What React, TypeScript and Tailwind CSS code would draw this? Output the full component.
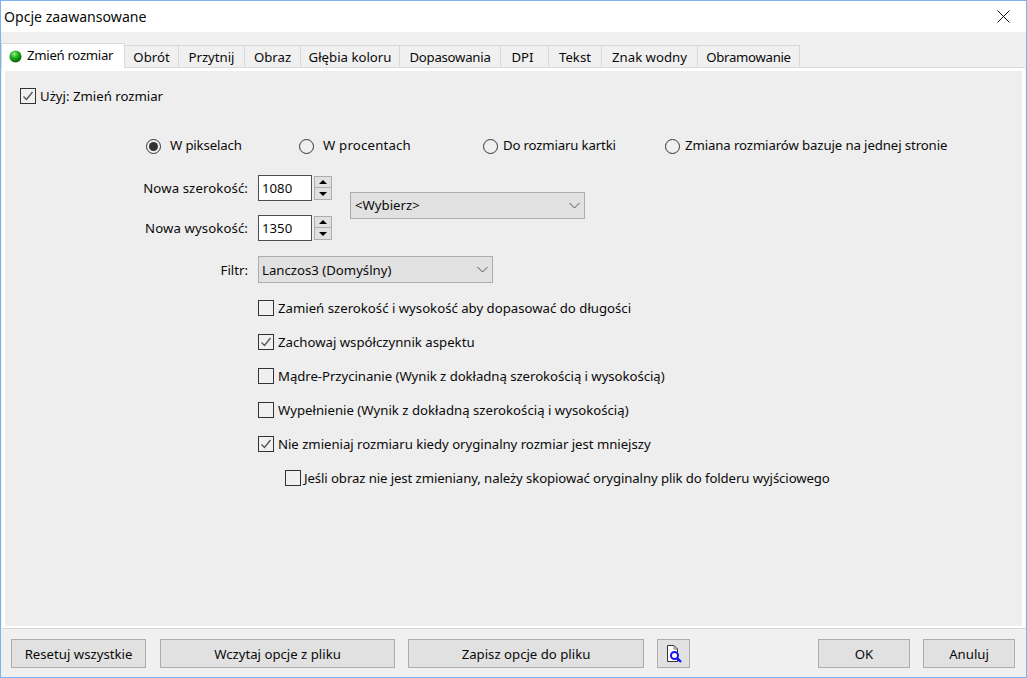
import React from 'react';

const tabs: [string, number, string][] = [
  ['Obrót', 54, ''],
  ['Przytnij', 66, ''],
  ['Obraz', 56, ''],
  ['Głębia koloru', 99, ''],
  ['Dopasowania', 101, 'tracking-[-0.25px]'],
  ['DPI', 48, 'pr-[4px]'],
  ['Tekst', 53, ''],
  ['Znak wodny', 96, ''],
  ['Obramowanie', 102, 'tracking-[-0.3px]'],
];

const Check = ({ checked }: { checked?: boolean }) => (
  <span className="w-4 h-4 shrink-0 bg-[#f0f0f0] border border-[#333333] flex items-center justify-center">
    {checked && (
      <svg width="14" height="14" viewBox="0 0 14 14" fill="none">
        <path d="M2.5 7.5 L5.5 10.5 L11.5 3" stroke="#555555" strokeWidth="1.4" />
      </svg>
    )}
  </span>
);

const CheckRow = ({ label, checked, indent, fit = '' }: { label: string; checked?: boolean; indent?: boolean; fit?: string }) => (
  <div className={`h-[34px] flex items-center ${indent ? 'pl-[280px] gap-[3px]' : 'pl-[253px] gap-1'}`}>
    <Check checked={checked} />
    <span className={`pt-[2px] ${fit}`}>{label}</span>
  </div>
);

const Radio = ({ label, checked, width, gap, fit = '' }: { label: string; checked?: boolean; width: string; gap: string; fit?: string }) => (
  <div className={`flex items-center whitespace-nowrap ${width} ${gap}`}>
    <span className="w-[15px] h-[15px] shrink-0 rounded-full bg-[#f0f0f0] border border-[#333333] flex items-center justify-center">
      {checked && <span className="w-[9px] h-[9px] rounded-full bg-[#333333]" />}
    </span>
    <span className={fit}>{label}</span>
  </div>
);

const Spinner = () => (
  <div className="w-[18px] h-[24px] ml-[2px] flex flex-col">
    <div className="h-[12px] bg-[#e1e1e1] border border-[#adadad] flex items-center justify-center">
      <span className="w-0 h-0 border-x-[4px] border-x-transparent border-b-[4px] border-b-black" />
    </div>
    <div className="h-[12px] bg-[#e1e1e1] border border-t-0 border-[#adadad] flex items-center justify-center">
      <span className="w-0 h-0 border-x-[4px] border-x-transparent border-t-[4px] border-t-black" />
    </div>
  </div>
);

const Chevron = () => (
  <svg width="11" height="7" viewBox="0 0 11 7" fill="none">
    <path d="M0.5 1 L5.5 6 L10.5 1" stroke="#555555" strokeWidth="1" />
  </svg>
);

const Select = ({ label, width, left }: { label: string; width: string; left: string }) => (
  <div className={`${width} ${left} h-[27px] bg-[#e1e1e1] border border-[#adadad] flex items-center justify-between pr-[4px]`}>
    <span className="pt-[2px]">{label}</span>
    <Chevron />
  </div>
);

const SizeRow = ({ label, value }: { label: string; value: string }) => (
  <div className="h-[26px] flex items-center">
    <span className="w-[243px] pt-[2px] text-right tracking-[0.1px]">{label}</span>
    <div className="w-[54px] h-[26px] ml-[10px] pt-[2px] bg-white border border-[#4d4d4d] pl-[3px] flex items-center">{value}</div>
    <Spinner />
  </div>
);

const Btn = ({ label, width }: { label: string; width: string }) => (
  <div className={`${width} h-[29px] pt-[2px] bg-[#e1e1e1] border border-[#adadad] flex items-center justify-center`}>{label}</div>
);

export default function App() {
  return (
    <div
      className="w-[1027px] h-[678px] bg-[#f0f0f0] border border-[#7ab4ee] flex flex-col overflow-hidden text-[13.2px] leading-none text-[#0a0a0a]"
      style={{ fontFamily: '"Noto Sans", "Open Sans", sans-serif' }}
    >
      {/* Title bar */}
      <div className="h-[31px] shrink-0 bg-white flex items-center justify-between pl-[3px] pr-[16px]">
        <span className="text-[14.1px] pt-[1px]">Opcje zaawansowane</span>
        <svg width="13" height="13" viewBox="0 0 13 13" fill="none">
          <path d="M0.5 0.5 L12.5 12.5 M12.5 0.5 L0.5 12.5" stroke="#111111" strokeWidth="1" />
        </svg>
      </div>

      {/* Tabs */}
      <div className="h-[35px] shrink-0 flex items-end">
        <div className="relative z-10 w-[124px] h-[25px] -mb-px bg-white border border-b-0 border-[#d9d9d9] flex items-center pl-[7px] gap-[5px]">
          <svg width="13" height="13" viewBox="0 0 13 13">
            <defs>
              <radialGradient id="ball" cx="40%" cy="30%" r="70%">
                <stop offset="0%" stopColor="#9af08a" />
                <stop offset="45%" stopColor="#1fb31f" />
                <stop offset="100%" stopColor="#075f07" />
              </radialGradient>
            </defs>
            <circle cx="6.5" cy="6.5" r="6" fill="url(#ball)" />
          </svg>
          <span className="tracking-[-0.3px]">Zmień rozmiar</span>
        </div>
        {tabs.map(([name, w, fit]) => (
          <div
            key={name}
            className={`h-[22px] pt-[3px] bg-[#f0f0f0] border border-b-0 border-l-0 border-[#d9d9d9] flex items-center justify-center shrink-0 ${fit}`}
            style={{ width: w }}
          >
            {name}
          </div>
        ))}
      </div>

      {/* Panel */}
      <div className="flex-1 ml-px mr-px border-t border-[#d9d9d9] bg-white px-[3px] pt-[3px] pb-[2px] flex">
        <div className="flex-1 bg-[#eeeeee]">
          <div className="pl-[15px] pt-[17px] flex items-center gap-1 h-[33px]">
            <Check checked />
            <span className="pt-[2px]">Użyj: Zmień rozmiar</span>
          </div>

          <div className="mt-[25px] h-[34px] pl-[141px] flex items-center">
            <Radio label="W pikselach" checked width="w-[153px]" gap="gap-[9px]" fit="tracking-[-0.15px]" />
            <Radio label="W procentach" width="w-[184px]" gap="gap-[9px]" fit="tracking-[0.2px]" />
            <Radio label="Do rozmiaru kartki" width="w-[182px]" gap="gap-[5px]" fit="tracking-[-0.15px]" />
            <Radio label="Zmiana rozmiarów bazuje na jednej stronie" width="w-[290px]" gap="gap-[5px]" fit="tracking-[-0.1px]" />
          </div>

          <div className="mt-[12px] flex items-center">
            <div className="flex flex-col gap-[14px]">
              <SizeRow label="Nowa szerokość:" value="1080" />
              <SizeRow label="Nowa wysokość:" value="1350" />
            </div>
            <Select label="<Wybierz>" width="w-[235px] mb-[6px]" left="ml-[18px] pl-[4px]" />
          </div>

          <div className="mt-[15px] flex items-center">
            <span className="w-[243px] pt-[2px] text-right">Filtr:</span>
            <Select label="Lanczos3 (Domyślny)" width="w-[235px]" left="ml-[10px] pl-[3px]" />
          </div>

          <div className="mt-[8px]">
            <CheckRow label="Zamień szerokość i wysokość aby dopasować do długości" />
            <CheckRow label="Zachowaj współczynnik aspektu" checked />
            <CheckRow label="Mądre-Przycinanie (Wynik z dokładną szerokością i wysokością)" fit="tracking-[-0.05px]" />
            <CheckRow label="Wypełnienie (Wynik z dokładną szerokością i wysokością)" />
            <CheckRow label="Nie zmieniaj rozmiaru kiedy oryginalny rozmiar jest mniejszy" fit="tracking-[-0.03px]" checked />
            <CheckRow label="Jeśli obraz nie jest zmieniany, należy skopiować oryginalny plik do folderu wyjściowego" fit="tracking-[-0.1px]" indent />
          </div>
        </div>
      </div>

      {/* Footer */}
      <div className="h-[49px] shrink-0 ml-px border-t border-[#d9d9d9] pl-[9px] pr-[11px] pt-[10px] flex items-start">
        <Btn label="Resetuj wszystkie" width="w-[135px]" />
        <div className="w-[14px]" />
        <Btn label="Wczytaj opcje z pliku" width="w-[235px]" />
        <div className="w-[13px]" />
        <Btn label="Zapisz opcje do pliku" width="w-[236px]" />
        <div className="w-[13px]" />
        <div className="w-[33px] h-[29px] bg-[#e1e1e1] border border-[#adadad] flex items-center justify-center">
          <svg width="20" height="20" viewBox="0 0 20 20" fill="none">
            <path d="M3.5 1.5 H10 L13.5 5 V17.5 H3.5 Z" fill="#ffffff" stroke="#333333" />
            <path d="M10 1.5 V5 H13.5" stroke="#777777" />
            <circle cx="10.5" cy="11.5" r="3.5" stroke="#1414f0" strokeWidth="2" fill="#ffffff" />
            <path d="M13 14 L17 18" stroke="#1414f0" strokeWidth="2.4" />
          </svg>
        </div>
        <div className="flex-1" />
        <Btn label="OK" width="w-[92px]" />
        <div className="w-[13px]" />
        <Btn label="Anuluj" width="w-[92px]" />
      </div>
    </div>
  );
}
